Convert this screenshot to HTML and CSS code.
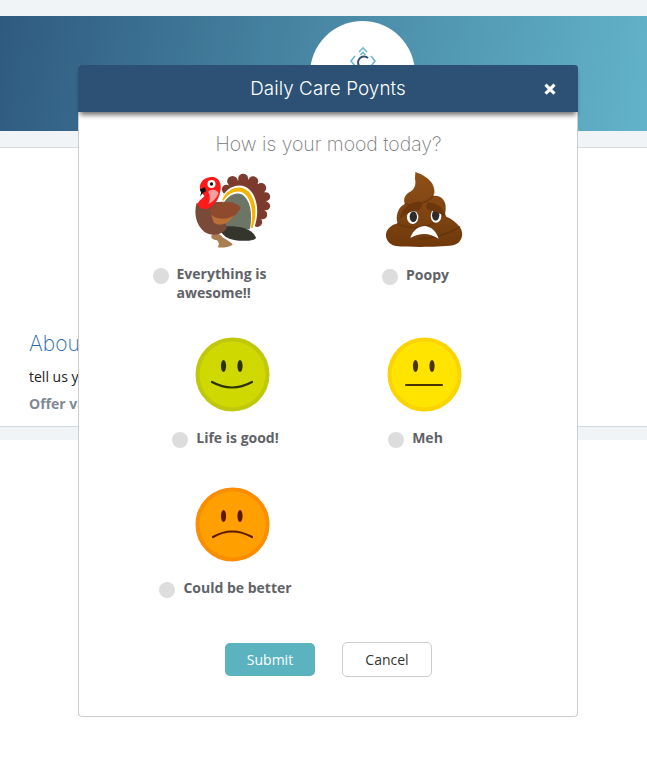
FILE: index.html
```html
<!DOCTYPE html>
<html lang="en">
<head>
<meta charset="utf-8">
<title>Daily Care Poynts</title>
<link rel="stylesheet" href="styles.css">
</head>
<body>
<div class="page">
  <header class="banner-wrap">
    <div class="banner">
      <div class="logo-disc">
        <svg class="logo" viewBox="0 0 30 30" aria-hidden="true">
          <path class="logo-light" d="M11 7 L15 3 L19 7 M12.5 10 L15 7.5 L17.5 10 M7 11 L3 16 L7 21 M23 11 L27 16 L23 21"/>
          <path class="logo-dark" d="M20 13 A6 6 0 1 0 20 22"/>
        </svg>
      </div>
    </div>
  </header>
  <section class="about">
    <h2 class="about-title">About you</h2>
    <p class="about-text">tell us your story</p>
    <p class="about-offer">Offer value</p>
  </section>
  <div class="strip"></div>
</div>

<form class="modal">
  <div class="modal-header">
    <h1 class="modal-title">Daily Care Poynts</h1>
    <svg class="close" viewBox="0 0 12 12" aria-hidden="true"><path d="M2.6 0.6 L6 4 L9.4 0.6 L11.6 2.8 L8.2 6.2 L11.6 9.6 L9.4 11.8 L6 8.4 L2.6 11.8 L0.4 9.6 L3.8 6.2 L0.4 2.8 Z"/></svg>
  </div>
  <div class="modal-body">
    <h2 class="question">How is your mood today?</h2>
    <div class="moods">
      <div class="mood">
        <div class="mood-pic">
          <svg class="emoji" viewBox="150 30 260 240" aria-hidden="true">
            <g fill="#7d3b2d">
              <circle cx="262" cy="88" r="14"/><circle cx="280" cy="64" r="16"/><circle cx="312" cy="56" r="15"/><circle cx="342" cy="64" r="15"/><circle cx="366" cy="84" r="15"/><circle cx="380" cy="110" r="13"/><circle cx="380" cy="138" r="13"/><circle cx="370" cy="164" r="14"/><circle cx="354" cy="186" r="15"/>
              <circle cx="316" cy="124" r="66"/>
            </g>
            <path fill="#fff" d="M247 118 C258 84 292 70 318 80 C350 94 366 150 344 206 L280 206 Z"/>
            <path fill="#f4b400" d="M250 118 C262 90 292 76 316 86 C344 100 360 150 340 204 L280 204 Z"/>
            <path fill="#fff" d="M252 124 C266 98 292 88 312 98 C334 110 346 156 334 206 L280 206 Z"/>
            <path fill="#6d7666" d="M252 130 C268 104 292 94 310 104 C332 118 342 160 332 208 L250 208 Z"/>
            <path fill="#34362e" d="M240 200 C280 198 332 196 350 232 C352 240 330 243 300 242 C270 240 245 228 240 200 Z"/>
            <path fill="#a97f52" d="M218 224 C228 216 246 222 250 232 C262 240 282 250 280 254 C270 262 246 264 236 262 C242 252 238 244 232 240 C224 240 212 234 218 224 Z"/>
            <path fill="#7a4a38" d="M172 130 C164 160 170 195 195 215 C215 230 250 226 262 205 L250 125 Z"/>
            <path fill="#8f4a2e" d="M214 150 C232 120 285 116 305 144 C290 172 262 186 236 180 C222 176 214 164 214 150 Z"/>
            <path fill="#b96f36" d="M216 164 C232 178 262 182 284 166 C270 194 240 200 224 188 Z"/>
            <path fill="#ff1a1a" d="M182 82 C184 58 206 48 226 52 C244 58 248 78 243 96 C238 120 226 138 205 146 C190 150 176 142 176 130 C180 120 192 114 196 108 C190 102 182 95 182 82 Z"/>
            <path fill="#f8a0a0" d="M207 96 C216 86 234 88 238 100 C234 112 222 126 208 132 C214 118 213 106 207 96 Z"/>
            <path fill="#111" d="M182 88 L198 82 L200 94 L190 100 L182 110 L186 98 Z"/>
            <circle cx="217" cy="72" r="12" fill="#fff"/><circle cx="217" cy="72" r="5" fill="#111"/>
          </svg>
        </div>
        <label class="mood-label"><input class="radio" type="radio" name="mood"><span class="mood-text">Everything is awesome!!</span></label>
      </div>
      <div class="mood">
        <div class="mood-pic">
          <svg class="emoji" viewBox="40 30 245 240" aria-hidden="true">
            <defs>
              <linearGradient id="poop" x1="0" y1="0" x2="0" y2="1"><stop offset="0" stop-color="#8f5119"/><stop offset="1" stop-color="#70390b"/></linearGradient>
            </defs>
            <path fill="url(#poop)" d="M135 36 C160 44 190 62 192 90 C194 100 190 104 188 108 C210 104 228 120 226 146 C226 156 222 162 228 170 C244 176 258 188 268 200 C284 222 274 250 248 256 C200 262 120 262 76 258 C48 252 38 222 56 204 C64 196 74 192 82 190 C74 168 84 140 104 132 C98 120 102 104 122 94 C132 86 138 74 134 56 Z"/>
            <path fill="none" stroke="#5a2c08" stroke-width="5" stroke-linecap="round" opacity=".5" d="M104 132 C130 138 172 130 188 108 M82 190 C110 208 160 206 190 190 M150 236 C190 236 240 220 268 200"/>
            <ellipse cx="127" cy="172" rx="17" ry="20" fill="#fff"/><ellipse cx="197" cy="168" rx="16" ry="20" fill="#fff"/>
            <ellipse cx="129" cy="170" rx="11" ry="16" fill="#2d2a2a"/><ellipse cx="196" cy="166" rx="11" ry="16" fill="#2d2a2a"/>
            <path fill="#6d370d" d="M88 178 C92 146 122 122 152 126 C158 136 152 146 146 150 C124 152 104 162 88 178 Z M172 128 C196 126 224 146 226 172 C208 158 190 152 174 150 C168 144 166 134 172 128 Z"/>
            <path fill="#fff" d="M120 234 C128 208 148 198 164 198 C182 200 198 214 205 236 C190 228 176 222 162 222 C148 222 134 226 120 234 Z"/>
          </svg>
        </div>
        <label class="mood-label"><input class="radio" type="radio" name="mood"><span class="mood-text mood-text-low">Poopy</span></label>
      </div>
      <div class="mood">
        <div class="mood-pic">
          <svg class="face" viewBox="0 0 75 75" aria-hidden="true">
            <circle class="face-good" cx="37.5" cy="37.5" r="35"/>
            <g class="ink-good">
              <ellipse cx="28.5" cy="29" rx="2.6" ry="6"/><ellipse cx="45" cy="29" rx="2.6" ry="6"/>
              <path class="mouth" d="M17 45 Q37 56 57 45"/>
            </g>
          </svg>
        </div>
        <label class="mood-label"><input class="radio" type="radio" name="mood"><span class="mood-text">Life is good!</span></label>
      </div>
      <div class="mood">
        <div class="mood-pic">
          <svg class="face" viewBox="0 0 75 75" aria-hidden="true">
            <circle class="face-meh" cx="37.5" cy="37.5" r="35"/>
            <g class="ink-meh">
              <ellipse cx="28.5" cy="29" rx="2.6" ry="6"/><ellipse cx="45" cy="29" rx="2.6" ry="6"/>
              <path class="mouth" d="M19 48 L55 48"/>
            </g>
          </svg>
        </div>
        <label class="mood-label"><input class="radio" type="radio" name="mood"><span class="mood-text">Meh</span></label>
      </div>
      <div class="mood">
        <div class="mood-pic">
          <svg class="face" viewBox="0 0 75 75" aria-hidden="true">
            <circle class="face-bad" cx="37.5" cy="37.5" r="35"/>
            <g class="ink-bad">
              <ellipse cx="28.5" cy="29" rx="2.6" ry="6"/><ellipse cx="45" cy="29" rx="2.6" ry="6"/>
              <path class="mouth" d="M18 50 Q37 39 57 50"/>
            </g>
          </svg>
        </div>
        <label class="mood-label"><input class="radio" type="radio" name="mood"><span class="mood-text">Could be better</span></label>
      </div>
    </div>
    <div class="actions">
      <button class="btn btn-submit" type="button">Submit</button>
      <button class="btn btn-cancel" type="button">Cancel</button>
    </div>
  </div>
</form>
</body>
</html>
```
FILE: styles.css
```css
* { box-sizing: border-box; }
html, body { margin: 0; padding: 0; }
body {
  background: #fff;
  font-family: "Open Sans", sans-serif;
  font-size: 14px;
  height: 758px;
  overflow: hidden;
  position: relative;
}
.banner-wrap {
  background: #f0f4f7;
  padding: 16px 0;
  height: 148px;
  border-bottom: 1px solid #d3dae0;
}
.banner {
  height: 115px;
  background: linear-gradient(100deg, #2f5a80 0%, #44809f 40%, #62b3ca 100%);
  display: flex;
  justify-content: center;
  padding: 5px 0 0 78px;
  overflow: hidden;
}
.logo-disc {
  width: 105px;
  height: 105px;
  border-radius: 50%;
  background: #fff;
  display: flex;
  justify-content: center;
  padding-top: 24px;
}
.logo { width: 30px; height: 30px; }
.logo-light { fill: none; stroke: #6fb9d6; stroke-width: 1.6; }
.logo-dark { fill: none; stroke: #33506e; stroke-width: 2; }
.about {
  height: 278px;
  padding: 183px 0 0 29px;
}
.about-title {
  margin: 0;
  font-family: Inter, sans-serif;
  font-weight: 200;
  font-size: 21px;
  line-height: 26px;
  color: #2a6aa6;
}
.about-text {
  margin: 10px 0 0;
  line-height: 20px;
  color: #222;
}
.about-offer {
  margin: 7px 0 0;
  line-height: 20px;
  font-weight: 700;
  color: #7f8a93;
}
.strip {
  height: 14px;
  background: #f0f4f7;
  border-top: 1px solid #cfd8df;
}
.modal {
  position: absolute;
  left: 78px;
  top: 65px;
  width: 500px;
  height: 652px;
  background: #fff;
  border: 1px solid #ccc;
  border-top: 0;
  border-radius: 4px;
}
.modal-header {
  position: relative;
  margin: 0 -1px;
  height: 47px;
  background: #2c5175;
  border-radius: 3px 3px 0 0;
  box-shadow: 0 5px 5px -2px rgba(0, 0, 0, .55);
  display: flex;
  align-items: center;
  justify-content: center;
}
.modal-title {
  margin: 0;
  font-family: Inter, sans-serif;
  font-weight: 300;
  font-size: 18.8px;
  letter-spacing: .1px;
  color: #fff;
}
.close {
  position: absolute;
  right: 22px;
  top: 18px;
  width: 12px;
  height: 12px;
  fill: #fff;
}
.modal-body { padding: 20px 57px 0 58px; }
.question {
  margin: 0;
  height: 24px;
  text-align: center;
  font-family: Inter, sans-serif;
  font-weight: 200;
  font-size: 19.4px;
  line-height: 24px;
  color: #777;
}
.moods {
  margin-top: 16px;
  display: grid;
  grid-template-columns: 191px 192px;
  row-gap: 35px;
}
.mood {
  display: flex;
  flex-direction: column;
  align-items: center;
}
.mood-pic {
  height: 75px;
  display: flex;
  align-items: center;
  justify-content: center;
}
.emoji { height: 80px; width: 87px; flex: none; }
.face { width: 75px; height: 75px; flex: none; }
.face circle { stroke-width: 4; }
.face-good { fill: #cfd800; stroke: #c0c80c; }
.face-meh { fill: #ffe400; stroke: #fbd400; }
.face-bad { fill: #ffa000; stroke: #fb8e00; }
.ink-good { fill: #2a3300; stroke: #2a3300; }
.ink-meh { fill: #4a3300; stroke: #4a3300; }
.ink-bad { fill: #5a1a00; stroke: #5a1a00; }
.ink-good ellipse, .ink-meh ellipse, .ink-bad ellipse { stroke: none; }
.mouth { fill: none; stroke-width: 2.2; stroke-linecap: round; }
.mood-label {
  margin-top: 17px;
  padding-right: 14px;
  min-height: 23px;
  display: flex;
  align-items: flex-start;
  gap: 8px;
  max-width: 160px;
  font-weight: 700;
  font-size: 14px;
  line-height: 19px;
  color: #5f6368;
}
.mood:nth-child(even) .mood-label { padding-right: 17px; }
.mood:nth-child(n+3) .mood-label { margin-top: 16px; min-height: 24px; }
.mood-text-low { padding-top: 1px; }
.radio {
  appearance: none;
  flex: none;
  width: 16px;
  height: 16px;
  margin: 4px 0 0;
  border-radius: 50%;
  background: #ddd;
}
.mood:nth-child(2) .radio { margin-top: 5px; }
.actions {
  margin-top: 40px;
  display: flex;
  justify-content: center;
  align-items: center;
  gap: 27px;
}
.btn {
  width: 90px;
  font-family: "Open Sans", sans-serif;
  font-size: 14px;
  border-radius: 5px;
  padding: 0;
}
.btn-submit {
  height: 33px;
  border: 0;
  background: #5bb3c0;
  color: #fff;
}
.btn-cancel {
  height: 35px;
  border: 1px solid #ccc;
  background: #fff;
  color: #333;
}
```
